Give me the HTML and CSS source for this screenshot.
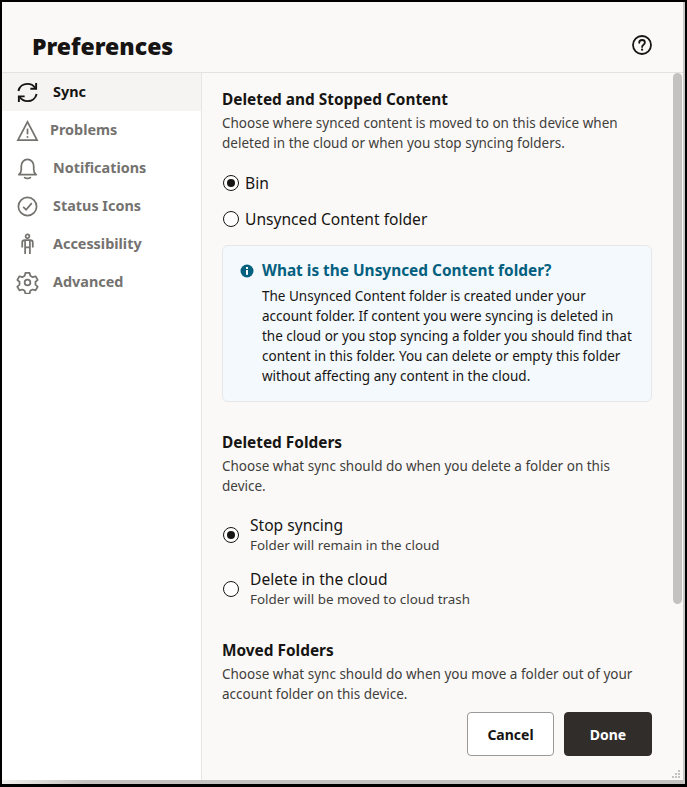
FILE: index.html
```html
<!DOCTYPE html>
<html lang="en">
<head>
    <meta charset="UTF-8">
    <meta name="viewport" content="width=device-width, initial-scale=1.0">
    <title>Preferences</title>
    <link rel="stylesheet" href="styles.css">
</head>
<body>
    <div class="dialog">
        <header class="dialog-header">
            <h1>Preferences</h1>
            <svg class="help" width="22" height="22" viewBox="0 0 22 22" fill="none" stroke="#161513" stroke-width="1.8">
                <circle cx="11" cy="11" r="9"></circle>
                <path d="M8.2 8.8c0-1.7 1.3-2.8 2.9-2.8 1.6 0 2.8 1 2.8 2.5 0 2.3-2.8 2.2-2.8 4.5" stroke-linecap="round"></path>
                <circle cx="11.1" cy="15.7" r="1.1" fill="#161513" stroke="none"></circle>
            </svg>
        </header>
        <div class="dialog-body">
            <nav class="sidebar">
                <a class="nav-item active">
                    <svg class="nav-icon" viewBox="0 0 24 24" fill="none" stroke="currentColor" stroke-width="2">
                        <path d="M2.5 10.5C3.5 6 7.3 3 12 3c3.3 0 6.2 1.5 8 4"></path>
                        <path d="M21 2v6h-6"></path>
                        <path d="M21.5 13.5C20.5 18 16.7 21 12 21c-3.3 0-6.2-1.5-8-4"></path>
                        <path d="M3 22v-6h6"></path>
                    </svg>
                    <span>Sync</span>
                </a>
                <a class="nav-item nav-problems">
                    <svg class="nav-icon" viewBox="0 0 24 24" fill="none" stroke="currentColor" stroke-width="1.8">
                        <path d="M12 3 2 22h20z" stroke-linejoin="miter"></path>
                        <path d="M12 10v6"></path>
                        <circle cx="12" cy="18.8" r="1" fill="currentColor" stroke="none"></circle>
                    </svg>
                    <span>Problems</span>
                </a>
                <a class="nav-item">
                    <svg class="nav-icon" viewBox="0 0 24 24" fill="none" stroke="currentColor" stroke-width="1.8">
                        <path d="M3 18.5c2-1.5 2.5-3 2.5-5.5V9.5C5.5 5.5 8.3 2.500 12 2.500s6.500 3 6.500 7V13c0 2.500.5 4 2.500 5.500z" stroke-linejoin="round"></path>
                        <path d="M9 21.5c1.5 1.2 4.5 1.2 6 0" stroke-linecap="round"></path>
                    </svg>
                    <span>Notifications</span>
                </a>
                <a class="nav-item">
                    <svg class="nav-icon" viewBox="0 0 24 24" fill="none" stroke="currentColor" stroke-width="1.8">
                        <circle cx="12" cy="12" r="9.5"></circle>
                        <path d="m7.5 12.5 3 3 6-7"></path>
                    </svg>
                    <span>Status Icons</span>
                </a>
                <a class="nav-item">
                    <svg class="nav-icon" viewBox="0 0 24 24" fill="none" stroke="currentColor" stroke-width="1.8">
                        <circle cx="12" cy="3.5" r="2"></circle>
                        <path d="M6.5 15V10c0-1.5 1-2.5 2.5-2.5h6c1.5 0 2.5 1 2.5 2.5v5"></path>
                        <path d="M9.5 8v14M14.5 8v14M9.5 15h5"></path>
                    </svg>
                    <span>Accessibility</span>
                </a>
                <a class="nav-item">
                    <svg class="nav-icon" viewBox="0 0 24 24" fill="none" stroke="currentColor" stroke-width="1.8" stroke-linejoin="round">
                        <path d="M9.8 2h4.4l.7 3 2.5 1.4 3-.9 2.2 3.8-2.3 2.1v2.900l2.300 2.100-2.200 3.800-3-.9-2.500 1.400-.7 3H9.800l-.7-3-2.500-1.400-3 .9-2.200-3.800 2.300-2.100v-2.900L1.400 9.300l2.200-3.800 3 .9L9.100 5z"></path>
                        <circle cx="12" cy="12" r="3"></circle>
                    </svg>
                    <span>Advanced</span>
                </a>
            </nav>
            <main class="content">
                <div class="scroll-thumb"></div>
                <section class="group-first">
                    <h2>Deleted and Stopped Content</h2>
                    <p class="desc">Choose where synced content is moved to on this device when deleted in the cloud or when you stop syncing folders.</p>
                    <div class="radio-row radio-first">
                        <span class="radio checked"></span>
                        <span class="radio-label">Bin</span>
                    </div>
                    <div class="radio-row radio-second">
                        <span class="radio"></span>
                        <span class="radio-label">Unsynced Content folder</span>
                    </div>
                    <div class="info-box">
                        <h3>
                            <svg class="info-icon" viewBox="0 0 14 14">
                                <circle cx="7" cy="7" r="6.5" fill="#04607f"></circle>
                                <rect x="6" y="6" width="2" height="4.8" fill="#fff"></rect>
                                <rect x="6" y="3" width="2" height="2" fill="#fff"></rect>
                            </svg>
                            What is the Unsynced Content folder?
                        </h3>
                        <p>The Unsynced Content folder is created under your account folder. If content you were syncing is deleted in the cloud or you stop syncing a folder you should find that content in this folder. You can delete or empty this folder without affecting any content in the cloud.</p>
                    </div>
                </section>
                <section class="group-folders">
                    <h2>Deleted Folders</h2>
                    <p class="desc">Choose what sync should do when you delete a folder on this device.</p>
                    <div class="option-row option-first">
                        <span class="radio checked"></span>
                        <div>
                            <div class="radio-label">Stop syncing</div>
                            <div class="option-sub">Folder will remain in the cloud</div>
                        </div>
                    </div>
                    <div class="option-row">
                        <span class="radio"></span>
                        <div>
                            <div class="radio-label">Delete in the cloud</div>
                            <div class="option-sub">Folder will be moved to cloud trash</div>
                        </div>
                    </div>
                </section>
                <section class="group-moved">
                    <h2>Moved Folders</h2>
                    <p class="desc">Choose what sync should do when you move a folder out of your account folder on this device.</p>
                </section>
                <div class="actions">
                    <button class="btn btn-cancel">Cancel</button>
                    <button class="btn btn-done">Done</button>
                </div>
                <svg class="grip" width="10" height="10" viewBox="0 0 10 10" fill="#c4c2c0">
                    <rect x="7" y="1" width="2" height="2"></rect>
                    <rect x="4" y="4" width="2" height="2"></rect>
                    <rect x="7" y="4" width="2" height="2"></rect>
                    <rect x="1" y="7" width="2" height="2"></rect>
                    <rect x="4" y="7" width="2" height="2"></rect>
                    <rect x="7" y="7" width="2" height="2"></rect>
                </svg>
            </main>
        </div>
        <div class="dialog-shadow"></div>
    </div>
</body>
</html>
```
FILE: styles.css
```css
html, body {
    margin: 0;
    height: 100%;
    background: #000;
}

body {
    font-family: "Noto Sans", "Open Sans", sans-serif;
    color: #161513;
    overflow: hidden;
}

.dialog {
    box-sizing: border-box;
    margin: 2px 2px 3px 2px;
    height: 782px;
    background: #fbf9f8;
    border-right: 2px solid #c9c7c5;
    display: flex;
    flex-direction: column;
}

.dialog-header {
    height: 71px;
    flex: none;
    box-sizing: border-box;
    padding: 27px 30px 0 30px;
    display: flex;
    justify-content: space-between;
    align-items: flex-start;
    border-bottom: 1px solid #e4e2e0;
}

h1 {
    margin: 0;
    font-size: 23px;
    line-height: 35px;
    font-weight: 900;
}

.help {
    margin-top: 5px;
}

.dialog-body {
    flex: 1;
    display: flex;
    min-height: 0;
}

.dialog-shadow {
    height: 4px;
    flex: none;
    background: linear-gradient(to right, #f0efee, #c4c2c0 12%);
}

.sidebar {
    width: 199px;
    flex: none;
    background: #fff;
    border-right: 1px solid #e8e6e4;
}

.nav-item {
    height: 38px;
    display: flex;
    align-items: center;
    padding-left: 14px;
    font-size: 14.4px;
    font-weight: 700;
    color: #74726f;
}

.nav-item span {
    margin-left: 14px;
    margin-bottom: 2px;
}

.nav-item.active {
    background: #f5f4f2;
    color: #161513;
}

.nav-problems span {
    margin-left: 11px;
}

.nav-icon {
    width: 23px;
    height: 23px;
    flex: none;
}

.content {
    flex: 1;
    position: relative;
    overflow: hidden;
    padding: 0 31px 0 20px;
}

.scroll-thumb {
    position: absolute;
    top: 0;
    right: 1px;
    width: 9px;
    height: 531px;
    background: #c4c2c0;
    border-radius: 5px;
}

h2 {
    margin: 0;
    font-size: 15.4px;
    line-height: 22px;
    font-weight: 700;
}

.desc {
    margin: 2px 0 0;
    font-size: 13.5px;
    line-height: 20px;
    color: #3f3e3b;
}

.group-first {
    padding-top: 16px;
}

.radio-row {
    display: flex;
    align-items: center;
    gap: 6px;
    height: 24px;
}

.radio-first {
    margin-top: 18px;
}

.radio-second {
    margin-top: 12px;
}

.radio {
    width: 16px;
    height: 16px;
    margin-left: 1px;
    box-sizing: border-box;
    flex: none;
    border-radius: 50%;
    border: 1.5px solid #161513;
    background: #fff;
    display: inline-flex;
    align-items: center;
    justify-content: center;
}

.radio.checked::after {
    content: "";
    width: 8px;
    height: 8px;
    border-radius: 50%;
    background: #161513;
}

.radio-label {
    font-size: 15.6px;
    line-height: 22px;
}

.info-box {
    margin-top: 14px;
    height: 157px;
    box-sizing: border-box;
    background: #f4f9fd;
    border: 1px solid #e6e7e8;
    border-radius: 6px;
    padding: 14px 17px 0 17px;
}

.info-box h3 {
    margin: 0;
    font-size: 15.4px;
    line-height: 22px;
    font-weight: 700;
    color: #04607f;
    display: flex;
    align-items: center;
    gap: 8px;
}

.info-icon {
    width: 14px;
    height: 14px;
    flex: none;
}

.info-box p {
    margin: 4px 0 0 22px;
    font-size: 13.5px;
    line-height: 20px;
}

.group-folders {
    margin-top: 30px;
}

.option-row {
    display: flex;
    align-items: center;
    gap: 11px;
    height: 42px;
    margin-top: 12px;
}

.option-first {
    margin-top: 18px;
}

.option-sub {
    font-size: 13.4px;
    line-height: 18px;
    margin-bottom: 2px;
    color: #3f3e3b;
}

.group-moved {
    margin-top: 30px;
}

.actions {
    position: absolute;
    right: 31px;
    bottom: 24px;
    display: flex;
    gap: 10px;
}

.btn {
    width: 88px;
    height: 44px;
    box-sizing: border-box;
    border-radius: 4px;
    font-family: inherit;
    font-size: 14px;
    font-weight: 700;
}

.btn-cancel {
    width: 87px;
    background: #fff;
    border: 1px solid #9b9997;
    color: #161513;
}

.btn-done {
    background: #312d2a;
    border: 1px solid #312d2a;
    color: #fff;
}

.grip {
    position: absolute;
    right: 2px;
    bottom: 1px;
}
```
